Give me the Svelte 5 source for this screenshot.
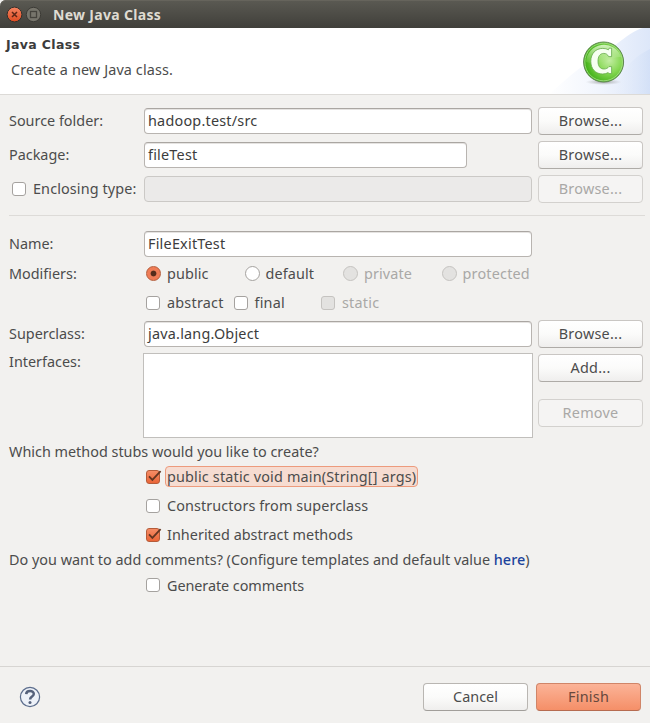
<script>
  const radios = [
    { label: 'public', checked: true, ls: 0.1 },
    { label: 'default', ls: 0.1 },
    { label: 'private', disabled: true, ls: 0.1 },
    { label: 'protected', disabled: true, ls: 0.2 }
  ];
  const flags = [
    { label: 'abstract', width: 87.5, ls: 0.22 },
    { label: 'final', width: 87.5, ls: 0.22 },
    { label: 'static', width: 80, ls: 0.22, disabled: true }
  ];
  const stubs = [
    { label: 'public static void main(String[] args)', checked: true, focused: true, ls: 0.17 },
    { label: 'Constructors from superclass', ls: 0.1 },
    { label: 'Inherited abstract methods', checked: true, ls: 0.03 }
  ];
</script>

{#snippet check(checked, disabled)}
  <span class="check" class:on={checked} class:disabled role="checkbox" aria-checked={!!checked}>
    {#if checked}
      <svg width="16" height="14" viewBox="0 0 16 14"><path d="M3 6.4 6.4 9.9 14.6 1.2" fill="none" stroke="#633521" stroke-width="1.8" /></svg>
    {/if}
  </span>
{/snippet}

<main class="window">
  <header class="titlebar">
    <svg width="42" height="28" viewBox="0 0 42 28">
      <defs>
        <linearGradient id="close" x2="0" y2="1"><stop stop-color="#f58462" /><stop offset="1" stop-color="#df4b20" /></linearGradient>
      </defs>
      <circle cx="14.5" cy="14.5" r="7.4" fill="url(#close)" stroke="#33302b" />
      <path d="m12 12 5 5m0-5-5 5" stroke="#5c2516" stroke-width="1.5" />
      <circle cx="33.5" cy="14.5" r="7.2" fill="#77756c" stroke="#3c3b36" />
      <rect x="30.5" y="11.5" width="6" height="6" fill="none" stroke="#45433d" stroke-width="1.3" />
    </svg>
    <span>New Java Class</span>
  </header>

  <section class="banner">
    <div class="heading">
      <h1>Java Class</h1>
      <p>Create a new Java class.</p>
    </div>
    <svg width="110" height="67" viewBox="540 28 110 67">
      <defs>
        <linearGradient id="wash" x1="0" x2="1"><stop stop-color="#fff" /><stop offset=".5" stop-color="#f1f5fd" /><stop offset="1" stop-color="#dde7f9" /></linearGradient>
        <linearGradient id="wash2" x1="0" x2="1"><stop stop-color="#e9effa" stop-opacity=".3" /><stop offset="1" stop-color="#cddcf6" /></linearGradient>
        <radialGradient id="ball" cx=".64" cy=".46" r=".62"><stop stop-color="#c3eda3" /><stop offset=".5" stop-color="#86d853" /><stop offset="1" stop-color="#3dae14" /></radialGradient>
        <linearGradient id="gloss" x2="0" y2="1"><stop stop-color="#e4f8d7" stop-opacity=".85" /><stop offset="1" stop-color="#a6e37c" stop-opacity=".15" /></linearGradient>
        <radialGradient id="shadow"><stop stop-color="#777" stop-opacity=".65" /><stop offset="1" stop-color="#999" stop-opacity="0" /></radialGradient>
      </defs>
      <path d="M650 28H643C625 33 611 53 580 68C568 77 558 87 548 95H650Z" fill="url(#wash)" />
      <path d="M650 49C632 58 622 69 615 95H650Z" fill="url(#wash2)" opacity=".6" />
      <ellipse cx="603.5" cy="82" rx="18" ry="3" fill="url(#shadow)" />
      <circle cx="603.6" cy="62" r="20" fill="url(#ball)" stroke="#5e8650" />
      <circle cx="603.6" cy="62" r="18.8" fill="none" stroke="#a9df8a" stroke-width=".8" />
      <path d="M586 62A18 18 0 0 1 621 57C612 56 600 67 586 62Z" fill="url(#gloss)" />
      <path d="M611.6 48.2V56.6H608.6C607.6 54.4 606 53.4 603.8 53.4C599.8 53.4 598 56.6 598 61.2C598 66 600 69 603.9 69C606.1 69 607.8 68.2 609 66.6H611.6V73.6H609.2L608.2 72.6C606.6 73.5 604.8 74 602.7 74C595.5 74 590.8 68.9 590.8 61.3C590.8 53.6 595.6 48.4 602.8 48.4C605 48.4 606.9 48.9 608.4 49.8L609.2 48.2Z" fill="#f6fff1" stroke="#66a94b" stroke-width=".8" />
    </svg>
  </section>

  <section class="form">
    <div class="row tall">
      <span class="label">Source folder:</span>
      <div class="field">hadoop.test/src</div>
      <button>Browse...</button>
    </div>
    <div class="row tall">
      <span class="label">Package:</span>
      <div class="field short">fileTest</div>
      <button>Browse...</button>
    </div>
    <div class="row tall">
      <span class="label enclosing">{@render check(false, false)}<span>Enclosing type:</span></span>
      <div class="field off"></div>
      <button disabled>Browse...</button>
    </div>

    <hr />

    <div class="row name">
      <span class="label">Name:</span>
      <div class="field">FileExitTest</div>
    </div>
    <div class="row modifiers">
      <span class="label">Modifiers:</span>
      <div class="options">
        {#each radios as r}
          <span class="option radio-option" class:dim={r.disabled} style:letter-spacing="{r.ls}px">
            <i class="radio" class:on={r.checked} class:disabled={r.disabled}></i>{r.label}
          </span>
        {/each}
      </div>
    </div>
    <div class="row flags">
      <span class="label"></span>
      <div class="options">
        {#each flags as f}
          <span class="option" class:dim={f.disabled} style:width="{f.width}px" style:letter-spacing="{f.ls}px">{@render check(false, f.disabled)}{f.label}</span>
        {/each}
      </div>
    </div>
    <div class="row super">
      <span class="label">Superclass:</span>
      <div class="field">java.lang.Object</div>
      <button>Browse...</button>
    </div>
    <div class="row interfaces">
      <span class="label">Interfaces:</span>
      <div class="list"></div>
      <div class="stack">
        <button>Add...</button>
        <button disabled>Remove</button>
      </div>
    </div>

    <p class="question stubs-question">Which method stubs would you like to create?</p>
    {#each stubs as s}
      <div class="row stub">
        <span class="option" style:letter-spacing="{s.ls}px">{@render check(s.checked, false)}<span class:focused={s.focused} class="caption">{s.label}</span></span>
      </div>
    {/each}
    <p class="question comments-question">Do you want to add comments? (Configure templates and default value <a href="#here">here</a>)</p>
    <div class="row stub comments">
      <span class="option">{@render check(false, false)}<span class="caption">Generate comments</span></span>
    </div>
  </section>

  <footer>
    <svg width="22" height="22" viewBox="0 0 22 22">
      <circle cx="11" cy="11" r="9.6" fill="#edf1f8" stroke="#5c6d8c" stroke-width="1.2" />
      <path d="M7.2 8.1C7.3 3.9 14.9 4 14.8 8C14.7 10.6 11.1 10.3 11.1 13.4" fill="none" stroke="#55617b" stroke-width="2.5" />
      <circle cx="11" cy="16.4" r="1.5" fill="#55617b" />
    </svg>
    <div class="actions">
      <button class="cancel">Cancel</button>
      <button class="primary">Finish</button>
    </div>
  </footer>
</main>

<style>
  :global(body) { margin: 0; }
  .window {
    width: 650px; height: 723px; box-sizing: border-box; overflow: hidden;
    display: flex; flex-direction: column;
    background: #f2f1ef; color: #4c4c4c;
    font: 14.4px/20px "Noto Sans", "Open Sans", sans-serif;
    white-space: nowrap;
  }
  .titlebar {
    height: 28px; display: flex; align-items: center; flex: none;
    background: linear-gradient(#5b5a53, #403f3a);
    border-radius: 6px 0 0; box-shadow: inset 0 1px #66645c;
    color: #dfdbd2; font-weight: 700; font-size: 14px; letter-spacing: .32px;
  }
  .titlebar span { margin: 1px 0 0 11px; }
  .banner {
    height: 66px; flex: none; display: flex; justify-content: space-between;
    background: #fff; border-bottom: 1px solid #dcdad7; overflow: hidden;
  }
  h1 { margin: 7px 0 0 6px; font: 700 12.5px/19px "DejaVu Sans", sans-serif; letter-spacing: .35px; color: #3c3c3c; }
  p { margin: 0; }
  .heading p { margin: 6px 0 0 11px; letter-spacing: .12px; }
  .form { height: 571px; flex: none; box-sizing: border-box; padding-top: 9px; }
  .row { display: flex; align-items: center; padding-left: 9px; }
  .tall { height: 34px; }
  .label { width: 135px; flex: none; }
  .field {
    box-sizing: border-box; width: 388px; height: 26px; padding: 0 3px; margin-right: 6px;
    border: 1px solid #b8b4b0; border-top-color: #aaa6a2; border-radius: 4px;
    background: #fff; color: #3c3c3c; line-height: 24px; letter-spacing: .22px; box-shadow: inset 0 1px #e5e3e1;
  }
  .short { width: 323px; margin-right: 71px; }
  .off { background: #ebeae9; border-color: #cbc9c6; box-shadow: none; }
  button {
    box-sizing: border-box; width: 105px; height: 28px; padding: 0; flex: none;
    border: 1px solid #c9c6c3; border-bottom-color: #aeaba7; border-radius: 4px;
    background: linear-gradient(#fff, #fbfbfa 50%, #efeeed);
    color: #4c4c4c; font: inherit; line-height: 24px; letter-spacing: .25px;
  }
  button:disabled { color: #a9a8a6; background: #f5f4f3; border-color: #d3d1ce; }
  .enclosing { display: flex; align-items: center; gap: 7px; padding-left: 3px; width: 132px; letter-spacing: .12px; }
  hr { margin: 9px 5px 0 9px; border: 0; border-top: 1px solid #dddbd8; }
  .name { margin-top: 12px; height: 31px; }
  .modifiers { height: 29px; }
  .flags { height: 29px; }
  .super { height: 34px; }
  .options { display: flex; padding-left: 2px; }
  .option { display: flex; align-items: center; }
  .radio-option { width: 98.5px; }
  .dim { color: #a9a8a6; }
  .check, .radio { box-sizing: border-box; width: 14px; height: 14px; flex: none; border: 1px solid #a5a29f; background: #fff; }
  .check { border-radius: 3px; }
  .radio { border-radius: 50%; width: 15px; height: 15px; }
  .option > .check { margin-right: 7px; }
  .option > .radio { margin-right: 6px; }
  .check.on { display: flex; background: linear-gradient(#f58c65, #ea6537); border-color: #b55c3a; }
  .check svg { flex: none; margin: -1px; }
  .radio.on { background: radial-gradient(circle, #552c1b 0 2.5px, #ef7c56 3.3px); border-color: #b55c3a; }
  .check.disabled, .radio.disabled { background: #e3e2e0; border-color: #c5c3c0; }
  .interfaces { align-items: flex-start; height: 89px; margin-top: 1px; }
  .list { box-sizing: border-box; width: 390px; height: 85px; margin: 1px 5px 0 -1px; border: 1px solid #c1bfbc; background: #fff; }
  .stack { display: flex; flex-direction: column; gap: 17px; padding-top: 2px; }
  .question { padding-left: 9px; }
  .stubs-question { height: 21px; line-height: 21px; }
  .stub { padding-left: 146px; height: 29px; }
  .caption { padding: 0 1px; border: 1px solid transparent; margin-left: -2px; line-height: 19px; }
  .focused { background: #f6dcd1; border-color: #ed9b7d; border-radius: 4px; }
  .comments-question { line-height: 22px; }
  .comments { height: 28px; letter-spacing: -.06px; }
  a { color: #1b439c; text-decoration: none; font-weight: 500; }
  footer {
    height: 57px; box-sizing: border-box; border-top: 1px solid #d7d5d2;
    display: flex; align-items: center; justify-content: space-between; padding: 3px 9px 0 19px;
  }
  .actions { display: flex; gap: 8px; padding-top: 1px; }
  .cancel { border-color: #b9b6b2; border-bottom-color: #a19e9a; letter-spacing: 0; }
  .primary { background: linear-gradient(#fbb397, #f58f68); border-color: #d08568; border-bottom-color: #b66b50; color: #66483d; }
</style>
